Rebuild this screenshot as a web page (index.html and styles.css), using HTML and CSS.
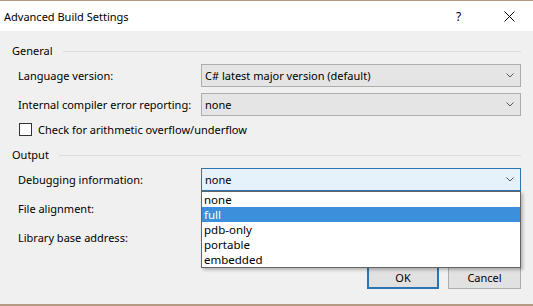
FILE: index.html
```html
<!DOCTYPE html>
<html lang="en">
<head>
    <meta charset="UTF-8">
    <title>Advanced Build Settings</title>
    <link rel="stylesheet" href="styles.css">
</head>
<body>
    <div class="window">
        <div class="titlebar">
            <span class="title">Advanced Build Settings</span>
            <span class="help">?</span>
            <span class="close">
                <svg width="11" height="11" viewBox="0 0 11 11"><path d="M0.5 0.5 L10.5 10.5 M10.5 0.5 L0.5 10.5" stroke="#000" stroke-width="1" fill="none"/></svg>
            </span>
        </div>

        <div class="content">
            <div class="group-head">
                <span>General</span>
                <div class="rule"></div>
            </div>

            <div class="row row-first">
                <label>Language version:</label>
                <div class="combo">
                    <span>C# latest major version (default)</span>
                    <svg class="chev" width="8" height="5" viewBox="0 0 8 5"><path d="M0.5 0.5 L4 4 L7.5 0.5" stroke="#555" fill="none"/></svg>
                </div>
            </div>

            <div class="row">
                <label>Internal compiler error reporting:</label>
                <div class="combo">
                    <span>none</span>
                    <svg class="chev" width="8" height="5" viewBox="0 0 8 5"><path d="M0.5 0.5 L4 4 L7.5 0.5" stroke="#555" fill="none"/></svg>
                </div>
            </div>

            <div class="check-row">
                <span class="checkbox"></span>
                <span>Check for arithmetic overflow/underflow</span>
            </div>

            <div class="group-head group-output">
                <span>Output</span>
                <div class="rule"></div>
            </div>

            <div class="row row-first">
                <label>Debugging information:</label>
                <div class="combo active">
                    <span>none</span>
                    <svg class="chev" width="8" height="5" viewBox="0 0 8 5"><path d="M0.5 0.5 L4 4 L7.5 0.5" stroke="#555" fill="none"/></svg>
                    <ul class="dropdown">
                        <li>none</li>
                        <li class="selected">full</li>
                        <li>pdb-only</li>
                        <li>portable</li>
                        <li>embedded</li>
                    </ul>
                </div>
            </div>

            <div class="row">
                <label>File alignment:</label>
            </div>

            <div class="row">
                <label>Library base address:</label>
            </div>

            <div class="buttons">
                <button class="btn btn-default">OK</button>
                <button class="btn">Cancel</button>
            </div>
        </div>
    </div>
</body>
</html>
```

FILE: styles.css
```css
* {
    margin: 0;
    padding: 0;
    box-sizing: border-box;
}

body {
    font-family: "Noto Sans", "Open Sans", sans-serif;
    font-size: 11px;
    color: #000;
    background: #f0f0f0;
    width: 533px;
    height: 306px;
    overflow: hidden;
}

.window {
    height: 306px;
    border-top: 1px solid #b49a82;
    border-bottom: 2px solid #b49a82;
    display: flex;
    flex-direction: column;
}

.titlebar {
    height: 30px;
    background: #fff;
    display: flex;
    align-items: center;
    padding-left: 4px;
}

.title {
    flex: 1;
    white-space: nowrap;
}

.help {
    width: 12px;
    margin-right: 36px;
    font-size: 12px;
}

.close {
    display: flex;
    width: 11px;
    margin-right: 18px;
}

.content {
    flex: 1;
    padding: 12px 12px 0 12px;
}

.group-head {
    display: flex;
    align-items: center;
    height: 16px;
    line-height: 16px;
}

.group-head span {
    white-space: nowrap;
}

.group-head .rule {
    flex: 1;
    height: 1px;
    background: #dcdcdc;
    margin-left: 10px;
}

.group-output {
    margin-top: 11px;
}

.group-output .rule {
    margin-left: 10px;
}

.row {
    display: flex;
    align-items: center;
    height: 23px;
    margin-top: 6px;
    padding-left: 6px;
}

.row-first {
    margin-top: 5px;
}

.row label {
    width: 183px;
    flex-shrink: 0;
    white-space: nowrap;
}

.combo {
    position: relative;
    flex: 1;
    height: 23px;
    background: #e5e5e5;
    border: 1px solid #adadad;
    display: flex;
    align-items: center;
    padding-left: 3px;
}

.combo span {
    flex: 1;
    white-space: nowrap;
}

.combo .chev {
    margin-right: 6px;
}

.combo.active {
    background: #e5f1fb;
    border-color: #2b74b4;
}

.dropdown {
    position: absolute;
    top: 22px;
    left: -1px;
    right: -1px;
    list-style: none;
    background: #fff;
    border: 1px solid #646464;
    box-shadow: 2px 2px 3px rgba(0,0,0,0.25);
    z-index: 1;
}

.dropdown li {
    height: 15px;
    line-height: 15px;
    padding-left: 2px;
    font-size: 11.5px;
}

.dropdown li.selected {
    background: #3b8fdb;
    color: #fff;
}

.check-row {
    display: flex;
    align-items: center;
    height: 13px;
    margin-top: 7px;
    padding-left: 7px;
    white-space: nowrap;
}

.checkbox {
    width: 13px;
    height: 13px;
    border: 1px solid #333;
    background: #fff;
    margin-right: 6px;
}

.buttons {
    display: flex;
    justify-content: flex-end;
    gap: 9px;
    margin-top: 17px;
}

.btn {
    font-family: inherit;
    font-size: 11px;
    width: 73px;
    height: 23px;
    background: #e1e1e1;
    border: 1px solid #adadad;
    color: #000;
}

.btn-default {
    border: 2px solid #2b74b4;
    width: 72px;
}
```
